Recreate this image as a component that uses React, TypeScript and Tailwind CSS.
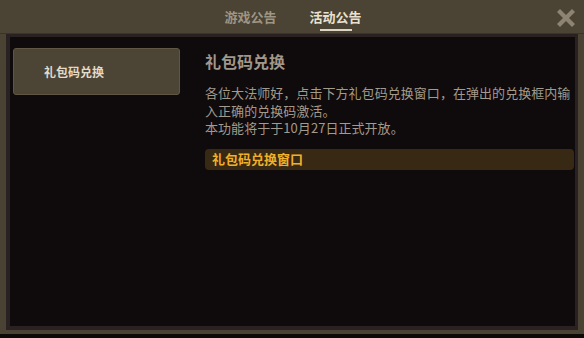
import { X } from 'lucide-react';

export default function App() {
  const tabs = [
    { name: '游戏公告', active: false },
    { name: '活动公告', active: true },
  ];

  return (
    <div className="w-[584px] h-[338px] overflow-hidden bg-[#0b0a07] font-['Noto_Sans_CJK_SC',sans-serif]">
      <div className="h-[334px] flex flex-col bg-[#4a4232]">
        {/* header tabs */}
        <div className="relative h-[34px] shrink-0 flex justify-center items-start pl-[2px] gap-[33px] bg-[#4b4333] shadow-[0_-1px_0_#3a3326_inset]">
          {tabs.map((tab) => (
            <div key={tab.name} className="flex flex-col items-center pt-[8px]">
              <span
                className={`text-[13px] leading-[18px] font-bold ${
                  tab.active ? 'text-[#e8e1d2]' : 'text-[#9e9584]'
                }`}
              >
                {tab.name}
              </span>
              {tab.active && <div className="mt-[3px] w-[32px] h-[2px] bg-[#ddd5c4]" />}
            </div>
          ))}
          <X className="absolute right-[6px] top-[6px] w-[24px] h-[24px] text-[#8d8473]" strokeWidth={4.2} strokeLinecap="square" />
        </div>

        {/* frame */}
        <div className="flex-1 flex pl-[6px] pr-[6px] pb-[4px]">
          <div className="flex-1 flex border-l-[4px] border-t-[3px] border-r-[3px] border-b-[4px] border-[#2a2123] bg-[#0f0a0b]">
            {/* sidebar */}
            <div className="w-[170px] pl-[3px] pt-[11px]">
              <div className="h-[47px] flex items-center pl-[30px] rounded-[3px] bg-[#4c4434] border border-[#5f5644]">
                <span className="text-[12px] font-bold text-[#e3dbca]">礼包码兑换</span>
              </div>
            </div>

            {/* content */}
            <div className="flex-1 pl-[25px] pr-0 pt-[13px]">
              <h2 className="text-[16px] leading-[22px] font-bold text-[#a0978a]">礼包码兑换</h2>
              <p className="mt-[12px] text-[13px] leading-[17.5px] tracking-[0.05px] text-[#a29a8c]">
                各位大法师好，点击下方礼包码兑换窗口，在弹出的兑换框内输入正确的兑换码激活。
                <br />
                本功能将于于10月27日正式开放。
              </p>
              <div className="mt-[12px] mr-[1px] h-[21px] flex items-center pl-[7px] rounded-[4px] bg-[#372914]">
                <span className="text-[13px] font-bold text-[#f0b02a]">礼包码兑换窗口</span>
              </div>
            </div>
          </div>
        </div>
      </div>
    </div>
  );
}
